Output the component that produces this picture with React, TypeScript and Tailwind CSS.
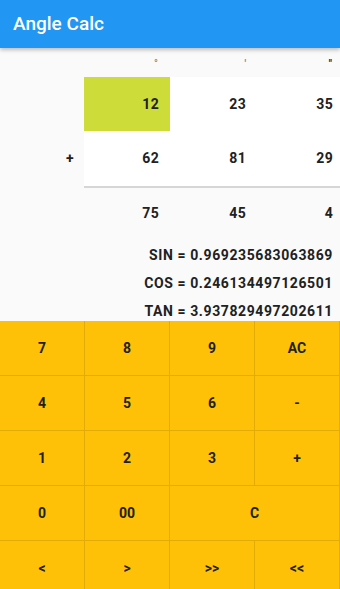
import React from "react";

const inputs = [
  { op: "", values: ["12", "23", "35"], active: 0 },
  { op: "+", values: ["62", "81", "29"], active: -1 },
];

const result = ["75", "45", "4"];

const trig = [
  "SIN = 0.969235683063869",
  "COS = 0.246134497126501",
  "TAN = 3.937829497202611",
];

const keys: { label: string; span?: boolean }[] = [
  { label: "7" }, { label: "8" }, { label: "9" }, { label: "AC" },
  { label: "4" }, { label: "5" }, { label: "6" }, { label: "-" },
  { label: "1" }, { label: "2" }, { label: "3" }, { label: "+" },
  { label: "0" }, { label: "00" }, { label: "C", span: true },
  { label: "<" }, { label: ">" }, { label: ">>" }, { label: "<<" },
];

export default function App() {
  return (
    <div className="w-[340px] h-[589px] overflow-hidden bg-[#fafafa] flex flex-col font-['Roboto','Liberation_Sans',sans-serif] text-[#212121]">
      {/* App bar */}
      <div className="h-12 shrink-0 bg-[#2196f3] flex items-center px-[13px] shadow-[0_2px_4px_rgba(0,0,0,0.25)] z-10">
        <span className="text-white text-[19px] font-medium">Angle Calc</span>
      </div>

      {/* Unit symbols */}
      <div className="grid grid-cols-[84px_86px_85px_85px] h-[29px] shrink-0 text-[10px] font-bold text-[#888]">
        <div />
        <div className="flex items-center justify-end pr-[12px] pt-[2px]">°</div>
        <div className="flex items-center justify-end pr-[9px] pt-[2px]">'</div>
        <div className="flex items-center justify-end pr-[8px] pt-[2px] text-[#222]">"</div>
      </div>

      {/* Operand rows */}
      {inputs.map((row, i) => (
        <div
          key={i}
          className={`grid grid-cols-[84px_86px_85px_85px] shrink-0 text-[14px] font-bold tracking-[0.3px] ${i === 0 ? "h-[54px]" : "h-[55px]"}`}
        >
          <div className="flex items-center justify-end pr-[10px]">{row.op}</div>
          {row.values.map((v, j) => (
            <div
              key={j}
              className={`flex items-center justify-end ${j === 0 ? "pr-[11px]" : j === 1 ? "pr-[9px]" : "pr-[7px]"} ${row.active === j ? "bg-[#cddc39]" : "bg-white"}`}
            >
              {v}
            </div>
          ))}
        </div>
      ))}

      {/* Divider */}
      <div className="grid grid-cols-[84px_1fr] shrink-0">
        <div />
        <div className="h-[2px] bg-[#d6d6d6]" />
      </div>

      {/* Result row */}
      <div className="grid grid-cols-[84px_86px_85px_85px] h-[51px] shrink-0 text-[14px] font-bold tracking-[0.3px]">
        <div />
        {result.map((v, j) => (
          <div
            key={j}
            className={`flex items-center justify-end ${j === 0 ? "pr-[11px]" : j === 1 ? "pr-[9px]" : "pr-[7px]"}`}
          >
            {v}
          </div>
        ))}
      </div>

      {/* Trig values */}
      <div className="h-[82px] shrink-0 overflow-hidden pt-[2px] pr-[7px] text-[14px] font-bold tracking-[0.6px]">
        {trig.map((t) => (
          <div key={t} className="h-[28px] flex items-center justify-end">
            {t}
          </div>
        ))}
      </div>

      {/* Keypad */}
      <div className="grid grid-cols-4 auto-rows-[55px] bg-[#ffc107] shrink-0">
        {keys.map((k) => (
          <button
            key={k.label}
            className={`flex items-center justify-center text-[14px] font-bold text-[#212121] border-r border-b border-[#e3ab05] ${k.span ? "col-span-2" : ""}`}
          >
            {k.label}
          </button>
        ))}
      </div>
    </div>
  );
}
